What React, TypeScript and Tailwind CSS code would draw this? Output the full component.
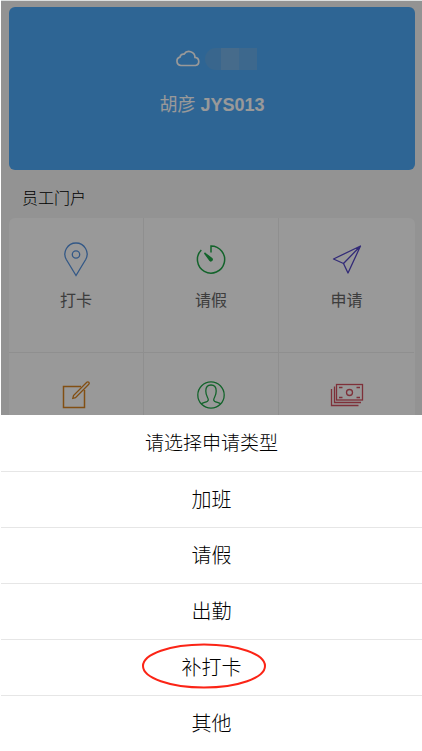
import type { ReactNode } from "react";

const stroke = { fill: "none", strokeWidth: 1.3 };

function PinIcon() {
  return (
    <svg width="36" height="36" viewBox="0 0 36 36" {...stroke} className="stroke-[#5693e0]">
      <path d="M18 33.500L8.300 17.500A11.100 11.100 0 1 1 27.700 17.500Z" />
      <circle cx="18" cy="12.500" r="3.700" />
    </svg>
  );
}

function TimerIcon() {
  return (
    <svg width="36" height="36" viewBox="0 0 36 36" {...stroke} strokeWidth="1.500" className="stroke-[#20a648]">
      <path d="M18 10.500V3.900a13.600 13.600 0 1 1-9.700 4.100" />
      <path d="M11.500 11l7.300 5.500a1.300 1.300 0 0 1-1.800 1.900Z" fill="#20a648" />
    </svg>
  );
}

function PlaneIcon() {
  return (
    <svg width="36" height="36" viewBox="0 0 36 36" {...stroke} strokeLinejoin="round" className="stroke-[#5548c8]">
      <path d="M31.500 4L4.500 17l10 4.500L19 31ZM31.500 4L14.500 21.500" />
    </svg>
  );
}

function EditIcon() {
  return (
    <svg width="36" height="36" viewBox="0 0 36 36" {...stroke} className="stroke-[#d98420]">
      <path d="M23 9.600H5.500v20.800h21V13" strokeWidth="1.500" />
      <path d="M28.800 5.300a1.300 1.300 0 0 1 2 2L17.500 20.600l-2.700.700.700-2.700Z" />
    </svg>
  );
}

function UserIcon() {
  return (
    <svg width="36" height="36" viewBox="0 0 36 36" {...stroke} className="stroke-[#20a648]">
      <circle cx="18" cy="18" r="13.200" />
      <path d="M8.300 26.700c2.700-1.500 7-1.600 7-3.700 0-2.500-2.500-3.500-2.500-9 0-4 2-6 5.200-6s5.200 2 5.200 6c0 5.500-2.500 6.500-2.500 9 0 2.100 4.300 2.200 7 3.700" />
    </svg>
  );
}

function MoneyIcon() {
  return (
    <svg width="36" height="36" viewBox="0 0 36 36" {...stroke} className="stroke-[#d2515f]">
      <rect x="7.500" y="7.500" width="26" height="15.500" />
      <path d="M5.500 9.500V25.500H32M2.500 12V28.500H29.500" />
      <circle cx="20.500" cy="15.500" r="3" />
      <path d="M10 10.500h3.500M27.500 10.500H31M10 20.500h3.500M27.500 20.500H31" />
    </svg>
  );
}

const tiles: { name: string; label?: string; icon: ReactNode }[] = [
  { name: "打卡", label: "打卡", icon: <PinIcon /> },
  { name: "请假", label: "请假", icon: <TimerIcon /> },
  { name: "申请", label: "申请", icon: <PlaneIcon /> },
  { name: "编辑", icon: <EditIcon /> },
  { name: "我的", icon: <UserIcon /> },
  { name: "薪资", icon: <MoneyIcon /> },
];

const options = ["加班", "请假", "出勤", "补打卡", "其他"];

export default function App() {
  return (
    <div className="h-screen overflow-hidden border-l border-white bg-white font-['Liberation_Sans','Noto_Sans_CJK_SC',sans-serif]">
      <div className="relative h-full overflow-hidden border-t border-[#dcdfdf] bg-[#f5f5f5]">
        <main className="px-2 pr-[7px] pt-1.5">
          <header className="flex h-[163px] flex-col items-center rounded-md bg-[#4ea9f7] pt-10 text-white">
            <div className="flex h-6 items-center gap-1 pl-2">
              <svg width="26" height="20" viewBox="0 0 26 20" fill="none" stroke="currentColor" strokeWidth="1.700">
                <path d="M6 16.500a4.300 4.300 0 0 1-1-8.400 3.700 3.700 0 0 1 4-2.900 6 6 0 0 1 11 3.200 4.100 4.100 0 0 1 .5 8.100Z" />
              </svg>
              <div className="flex h-[22px] w-[52px] overflow-hidden rounded-l-full bg-[#5fabeb]">
                <span className="ml-4 w-[18px] bg-[#76b3e8]" />
                <span className="flex-1 bg-[#66adeb]" />
              </div>
            </div>
            <p className="mt-5 text-lg leading-7">
              胡彦 <span className="font-bold">JYS013</span>
            </p>
          </header>
          <h2 className="px-[13px] pt-[17px] pb-[7px] text-base leading-6 font-light">员工门户</h2>
          <section className="grid grid-cols-3 overflow-hidden rounded-md bg-white pr-px">
            {tiles.map(({ name, label, icon }) => (
              <button
                key={name}
                type="button"
                aria-label={name}
                className="flex h-[135px] flex-col items-center border-r border-b border-[#eeeeee] pt-6 text-base leading-6 text-[#666] nth-[3n]:border-r-0"
              >
                {icon}
                {label && <span className="mt-[11px]">{label}</span>}
              </button>
            ))}
          </section>
        </main>
        <div className="absolute inset-0 bg-black/40" />
      </div>
      <div role="dialog" aria-label="请选择申请类型" className="fixed inset-x-0 bottom-0 bg-white pl-px text-center font-light text-black">
        <h1 className="h-14 text-[19px] leading-[58px]">请选择申请类型</h1>
        {options.map((option) => (
          <button key={option} type="button" className="block h-14 w-full border-t border-[#e6e6e6] text-xl">
            <span className="relative">
              {option}
              {option === "补打卡" && (
                <svg width="126" height="46" viewBox="0 0 126 46" className="absolute -top-3.5 -left-10 max-w-none fill-none stroke-[#fb2416] stroke-2">
                  <ellipse cx="62" cy="23" rx="61" ry="21.500" />
                </svg>
              )}
            </span>
          </button>
        ))}
      </div>
    </div>
  );
}
